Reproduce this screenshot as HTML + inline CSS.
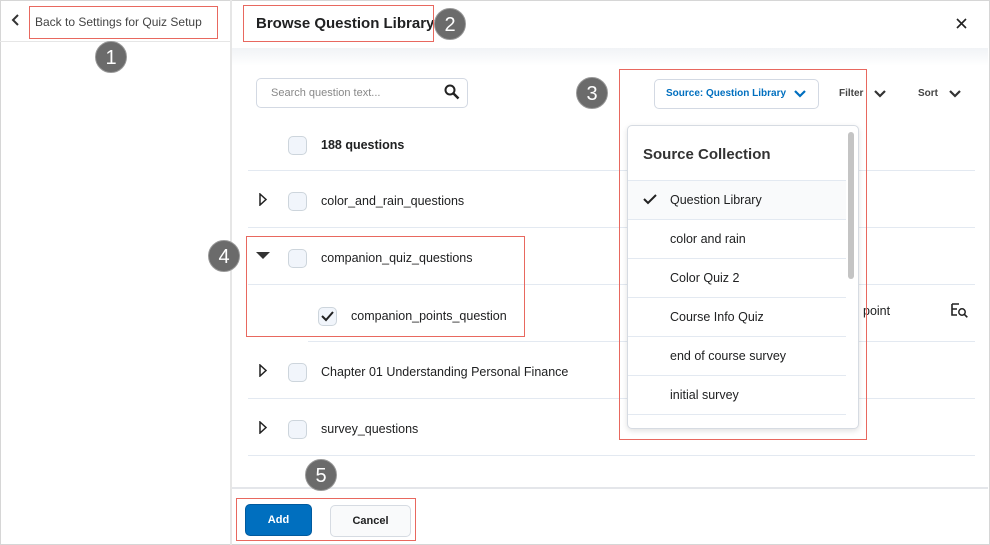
<!DOCTYPE html>
<html><head><style>
*{box-sizing:border-box;margin:0;padding:0}
body{width:990px;height:545px;position:relative;overflow:hidden;background:#fff;font-family:"Liberation Sans",sans-serif;color:#202122}
.a{position:absolute}
.red{position:absolute;border:1.5px solid #e8685f}
.badge{position:absolute;width:32px;height:32px;border-radius:50%;background:#6b6b6b;color:#fff;font-size:20px;text-align:center;line-height:32px;border:1px solid #999}
.cb{position:absolute;width:19px;height:19px;border:1px solid #cdd5dc;border-radius:5px;background:#f1f5fb}
.line{position:absolute;height:1px;background:#e3e9f1}
.t{position:absolute;font-size:12.5px;color:#202122;white-space:nowrap}
.item{position:absolute;left:628px;width:218px;height:39px;border-bottom:1px solid #e3e9f1;font-size:12.5px;line-height:39px;padding-left:42px}
</style></head><body>
<div class="a" style="left:0;top:0;width:990px;height:545px;border:1px solid #d6d6d6"></div>
<div class="a" style="left:230px;top:0;width:2px;height:545px;background:#e6e6e6"></div>
<div class="line" style="left:0;top:41px;width:230px;background:#e6e6e6"></div>
<svg class="a" style="left:11px;top:14px" width="10" height="12"><path d="M7 1L2 6l5 5" stroke="#333" stroke-width="2" fill="none"/></svg>
<div class="t" style="left:35px;top:15px;font-size:12px;color:#444">Back to Settings for Quiz Setup</div>
<div class="red" style="left:29px;top:6px;width:189px;height:33px"></div>
<div class="badge" style="left:95px;top:41px">1</div>
<div class="a" style="left:232px;top:48px;width:756px;height:18px;background:linear-gradient(#f1f3f6,#fff)"></div>
<div class="t" style="left:256px;top:15px;font-size:15px;font-weight:bold">Browse Question Library</div>
<div class="red" style="left:243px;top:5px;width:191px;height:37px"></div>
<div class="badge" style="left:434px;top:8px">2</div>
<svg class="a" style="left:956px;top:18px" width="11" height="11"><path d="M1 1l9 9M10 1l-9 9" stroke="#222" stroke-width="1.6"/></svg>
<div class="a" style="left:256px;top:78px;width:212px;height:30px;border:1px solid #d3d9e3;border-radius:5px"></div>
<div class="t" style="left:271px;top:87px;font-size:11px;color:#888">Search question text...</div>
<svg class="a" style="left:444px;top:84px" width="16" height="16"><circle cx="6" cy="6" r="4.5" stroke="#222" stroke-width="2" fill="none"/><path d="M9.5 9.5l5 5" stroke="#222" stroke-width="2.5"/></svg>
<div class="a" style="left:654px;top:79px;width:165px;height:30px;border:1px solid #d3d9e3;border-radius:5px"></div>
<div class="t" style="left:666px;top:88px;font-size:10px;font-weight:bold;color:#006fbf">Source: Question Library</div>
<svg class="a" style="left:794px;top:90px" width="12" height="8"><path d="M1 1l5 5 5-5" stroke="#006fbf" stroke-width="2.2" fill="none"/></svg>
<div class="t" style="left:839px;top:88px;font-size:10px;font-weight:bold;color:#444">Filter</div>
<svg class="a" style="left:874px;top:90px" width="12" height="8"><path d="M1 1l5 5 5-5" stroke="#333" stroke-width="2.2" fill="none"/></svg>
<div class="t" style="left:918px;top:88px;font-size:10px;font-weight:bold;color:#444">Sort</div>
<svg class="a" style="left:949px;top:90px" width="12" height="8"><path d="M1 1l5 5 5-5" stroke="#333" stroke-width="2.2" fill="none"/></svg>
<div class="badge" style="left:576px;top:77px">3</div>
<div class="cb" style="left:288px;top:136px"></div>
<div class="t" style="left:321px;top:138px;font-weight:bold">188 questions</div>
<div class="line" style="left:248px;top:170px;width:727px"></div>
<svg class="a" style="left:259px;top:193px" width="9" height="13"><path d="M1 1l6 5.5-6 5.5z" stroke="#222" stroke-width="1.5" fill="none"/></svg>
<div class="cb" style="left:288px;top:192px"></div>
<div class="t" style="left:321px;top:194px">color_and_rain_questions</div>
<div class="line" style="left:248px;top:227px;width:727px"></div>
<svg class="a" style="left:256px;top:252px" width="14" height="8"><path d="M0 0h14L7 7z" fill="#333"/></svg>
<div class="cb" style="left:288px;top:249px"></div>
<div class="t" style="left:321px;top:251px">companion_quiz_questions</div>
<div class="line" style="left:248px;top:284px;width:727px"></div>
<div class="cb" style="left:318px;top:307px"></div>
<svg class="a" style="left:321px;top:311px" width="13" height="11"><path d="M1 5l4 4 7-8" stroke="#222" stroke-width="2" fill="none"/></svg>
<div class="t" style="left:351px;top:309px">companion_points_question</div>
<div class="t" style="left:863px;top:304px">point</div>
<svg class="a" style="left:951px;top:302px" width="18" height="16"><path d="M1 2h7M1 2v11h5M1 7h5" stroke="#222" stroke-width="1.6" fill="none"/><circle cx="11" cy="10" r="3.2" stroke="#222" stroke-width="1.5" fill="none"/><path d="M13.3 12.3l3 3" stroke="#222" stroke-width="1.6"/></svg>
<div class="line" style="left:308px;top:341px;width:667px"></div>
<svg class="a" style="left:259px;top:364px" width="9" height="13"><path d="M1 1l6 5.5-6 5.5z" stroke="#222" stroke-width="1.5" fill="none"/></svg>
<div class="cb" style="left:288px;top:363px"></div>
<div class="t" style="left:321px;top:365px">Chapter 01 Understanding Personal Finance</div>
<div class="line" style="left:248px;top:398px;width:727px"></div>
<svg class="a" style="left:259px;top:421px" width="9" height="13"><path d="M1 1l6 5.5-6 5.5z" stroke="#222" stroke-width="1.5" fill="none"/></svg>
<div class="cb" style="left:288px;top:420px"></div>
<div class="t" style="left:321px;top:422px">survey_questions</div>
<div class="line" style="left:248px;top:455px;width:727px"></div>
<div class="red" style="left:246px;top:236px;width:279px;height:101px"></div>
<div class="badge" style="left:208px;top:240px">4</div>
<div class="a" style="left:627px;top:125px;width:232px;height:304px;background:#fff;border:1px solid #d6dbe2;border-radius:5px;box-shadow:0 2px 6px rgba(0,0,0,.12)"></div>
<div class="t" style="left:643px;top:146px;font-size:15px;font-weight:bold;color:#333">Source Collection</div>
<div class="line" style="left:628px;top:180px;width:218px"></div>
<div class="item" style="top:181px;background:#f9fafb">Question Library</div>
<svg class="a" style="left:643px;top:194px" width="14" height="11"><path d="M1 5l4 4 8-8" stroke="#222" stroke-width="2" fill="none"/></svg>
<div class="item" style="top:220px">color and rain</div>
<div class="item" style="top:259px">Color Quiz 2</div>
<div class="item" style="top:298px">Course Info Quiz</div>
<div class="item" style="top:337px">end of course survey</div>
<div class="item" style="top:376px">initial survey</div>
<div class="a" style="left:848px;top:132px;width:6px;height:147px;background:#c4c4c4;border-radius:3px"></div>
<div class="red" style="left:619px;top:69px;width:248px;height:371px"></div>
<div class="a" style="left:232px;top:487px;width:756px;height:2px;background:#e4e6ea"></div>
<div class="a" style="left:245px;top:504px;width:67px;height:32px;background:#006fbf;border-radius:5px;border:1px solid #005a9e;color:#fff;font-size:11px;font-weight:bold;text-align:center;line-height:30px">Add</div>
<div class="a" style="left:330px;top:505px;width:81px;height:32px;background:#f9fafb;border-radius:5px;border:1px solid #d6dbe2;font-size:11px;font-weight:bold;text-align:center;line-height:30px">Cancel</div>
<div class="red" style="left:236px;top:498px;width:180px;height:43px"></div>
<div class="badge" style="left:305px;top:459px">5</div>
</body></html>
